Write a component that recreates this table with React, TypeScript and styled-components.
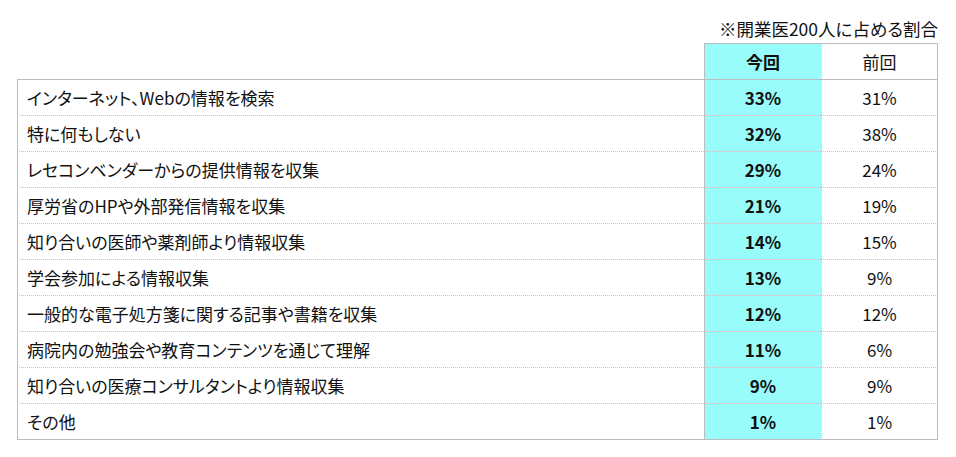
import styled, { createGlobalStyle } from 'styled-components';

const GlobalStyle = createGlobalStyle`
  html, body {
    margin: 0;
    padding: 0;
    background: #ffffff;
  }
  body {
    font-family: "Noto Sans CJK JP", "Noto Sans", sans-serif;
    font-feature-settings: "palt";
    color: #111111;
  }
`;

type Row = { label: string; now: string; prev: string };

const rows: Row[] = [
  { label: 'インターネット、Webの情報を検索', now: '33%', prev: '31%' },
  { label: '特に何もしない', now: '32%', prev: '38%' },
  { label: 'レセコンベンダーからの提供情報を収集', now: '29%', prev: '24%' },
  { label: '厚労省のHPや外部発信情報を収集', now: '21%', prev: '19%' },
  { label: '知り合いの医師や薬剤師より情報収集', now: '14%', prev: '15%' },
  { label: '学会参加による情報収集', now: '13%', prev: '9%' },
  { label: '一般的な電子処方箋に関する記事や書籍を収集', now: '12%', prev: '12%' },
  { label: '病院内の勉強会や教育コンテンツを通じて理解', now: '11%', prev: '6%' },
  { label: '知り合いの医療コンサルタントより情報収集', now: '9%', prev: '9%' },
  { label: 'その他', now: '1%', prev: '1%' },
];

const LINE = '#bdbdbd';
const DOT = '#c4c4c4';
const CYAN = '#97fcfa';

const Page = styled.div`
  width: 956px;
  height: 457px;
  padding: 17px 0 0 17px;
  box-sizing: border-box;
`;

const Note = styled.div`
  width: 921px;
  height: 26px;
  line-height: 24px;
  font-size: 17.5px;
  text-align: right;
`;

const Table = styled.div`
  display: grid;
  grid-template-columns: 687px 117px 117px;
  width: 921px;
`;

const Blank = styled.div`
  height: 36px;
`;

const HeadCell = styled.div<{ $current?: boolean }>`
  height: 36px;
  box-sizing: border-box;
  border-top: 1px solid ${LINE};
  border-left: 1px ${(p) => (p.$current ? 'solid' : 'dotted')} ${(p) => (p.$current ? LINE : DOT)};
  border-right: ${(p) => (p.$current ? 'none' : `1px solid ${LINE}`)};
  background: ${(p) => (p.$current ? CYAN : '#ffffff')};
  font-weight: ${(p) => (p.$current ? 700 : 400)};
  font-size: 17px;
  display: flex;
  align-items: center;
  justify-content: center;
`;

const Cell = styled.div<{ $first: boolean; $last: boolean }>`
  height: ${(p) => (p.$last ? 37 : 36)}px;
  box-sizing: border-box;
  border-top: 1px ${(p) => (p.$first ? `solid ${LINE}` : `dotted ${DOT}`)};
  border-bottom: ${(p) => (p.$last ? `1px solid ${LINE}` : 'none')};
  display: flex;
  align-items: center;
  font-size: 17px;
`;

const Label = styled(Cell)`
  border-left: 1px solid ${LINE};
  padding-left: 9px;
`;

const Value = styled(Cell)<{ $current?: boolean }>`
  justify-content: center;
  border-left: 1px ${(p) => (p.$current ? 'solid' : 'dotted')} ${(p) => (p.$current ? LINE : DOT)};
  border-right: ${(p) => (p.$current ? 'none' : `1px solid ${LINE}`)};
  background: ${(p) => (p.$current ? CYAN : '#ffffff')};
  font-weight: ${(p) => (p.$current ? 700 : 400)};
`;

export default function App() {
  return (
    <>
      <GlobalStyle />
      <Page>
        <Note>※開業医200人に占める割合</Note>
        <Table>
          <Blank />
          <HeadCell $current>今回</HeadCell>
          <HeadCell>前回</HeadCell>
          {rows.map((r, i) => {
            const first = i === 0;
            const last = i === rows.length - 1;
            return [
              <Label key={`l${i}`} $first={first} $last={last}>{r.label}</Label>,
              <Value key={`n${i}`} $first={first} $last={last} $current>{r.now}</Value>,
              <Value key={`p${i}`} $first={first} $last={last}>{r.prev}</Value>,
            ];
          })}
        </Table>
      </Page>
    </>
  );
}
